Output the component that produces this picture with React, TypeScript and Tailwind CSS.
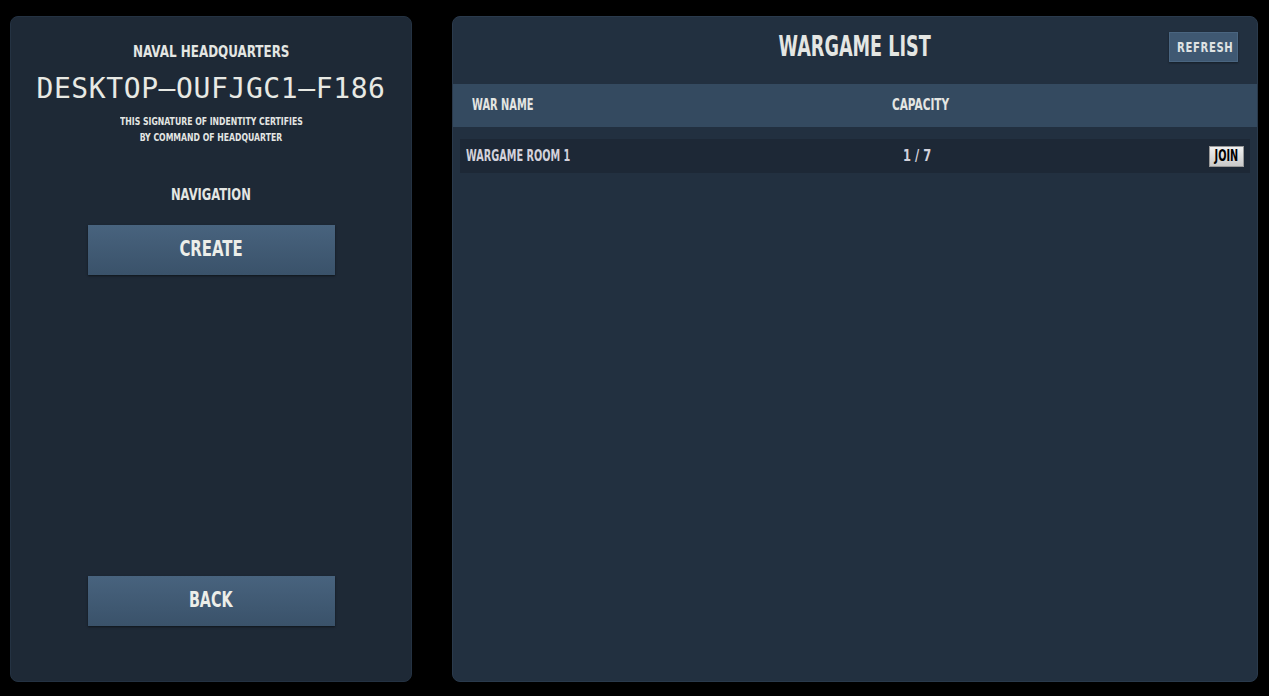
import React from "react";

const cond = { fontFamily: '"DejaVu Sans Condensed", "Liberation Sans", sans-serif' } as React.CSSProperties;
const mono = { fontFamily: '"DejaVu Sans Mono", "Liberation Mono", monospace' } as React.CSSProperties;

function N({ children, className = "" }: { children: React.ReactNode; className?: string }) {
  return <span className={"inline-block whitespace-nowrap " + className}>{children}</span>;
}

export default function App() {
  return (
    <div className="w-full h-[696px] bg-black flex pt-[16px] pb-[14px] pl-[10px] pr-[11px] gap-[40px] overflow-hidden" style={cond}>
      {/* Left panel */}
      <div className="w-[402px] h-full bg-[#1e2936] rounded-[8px] border border-[#243242] flex flex-col items-center text-[#e4e6e3]">
        <div className="mt-[25px] text-[16px] font-bold leading-[20px]">
          <N className="scale-x-[0.83]">NAVAL HEADQUARTERS</N>
        </div>
        <div className="mt-[10px] text-[28px] leading-[34px] tracking-[0.6px] text-[#e8e9e4]" style={mono}>DESKTOP–OUFJGC1–F186</div>
        <div className="mt-[7px] text-[10.5px] font-bold leading-[16px] text-center">
          <div><N className="scale-x-[0.82]">THIS SIGNATURE OF INDENTITY CERTIFIES</N></div>
          <div><N className="scale-x-[0.82]">BY COMMAND OF HEADQUARTER</N></div>
        </div>
        <div className="mt-[40px] text-[16px] font-bold leading-[20px]">
          <N className="scale-x-[0.8]">NAVIGATION</N>
        </div>
        <button className="mt-[20px] w-[247px] h-[50px] bg-gradient-to-b from-[#48637e] to-[#3a526a] shadow-[0_1px_2px_rgba(0,0,0,0.5)] text-[21px] font-bold text-[#eceee9]">
          <N className="scale-x-[0.79]">CREATE</N>
        </button>
        <div className="flex-1" />
        <button className="mb-[55px] w-[247px] h-[50px] bg-gradient-to-b from-[#48637e] to-[#3a526a] shadow-[0_1px_2px_rgba(0,0,0,0.5)] text-[21px] font-bold text-[#eceee9]">
          <N className="scale-x-[0.76]">BACK</N>
        </button>
      </div>

      {/* Right panel */}
      <div className="flex-1 h-full bg-[#223040] rounded-[8px] border border-[#2a3a4c] flex flex-col text-[#e4e6e3]">
        <div className="h-[67px] grid grid-cols-[1fr_auto_1fr] items-start">
          <div />
          <div className="mt-[14px] text-[28px] font-bold leading-[32px]">
            <N className="scale-x-[0.7]">WARGAME LIST</N>
          </div>
          <div className="flex justify-end pr-[19px] pt-[15px]">
            <button className="w-[69px] h-[30px] bg-[#3f5872] border border-[#4a6580] shadow-[0_1px_2px_rgba(0,0,0,0.4)] text-[14px] font-bold text-[#dfe3e4]">
              <N className="scale-x-[0.8] tracking-[0.8px]">REFRESH</N>
            </button>
          </div>
        </div>
        <div className="h-[43px] bg-[#344a60] flex items-center text-[15px] font-bold">
          <div className="pl-[19px] w-[439px]"><N className="scale-x-[0.73] origin-left">WAR NAME</N></div>
          <div><N className="scale-x-[0.78] origin-left">CAPACITY</N></div>
        </div>
        <div className="mt-[12px] mx-[7px] h-[34px] bg-[#1d2836] flex items-center text-[15px] font-bold text-[#d3d2dc]">
          <div className="pl-[6px] w-[443px]"><N className="scale-x-[0.72] origin-left">WARGAME ROOM 1</N></div>
          <div className="flex-1"><N className="scale-x-[0.85] origin-left">1 / 7</N></div>
          <button className="mr-[6px] w-[35px] h-[21px] bg-gradient-to-b from-[#f1f1f1] to-[#c9c9c9] border border-[#999] text-[15px] font-bold text-black leading-none overflow-hidden">
            <N className="scale-x-[0.72]">JOIN</N>
          </button>
        </div>
      </div>
    </div>
  );
}
